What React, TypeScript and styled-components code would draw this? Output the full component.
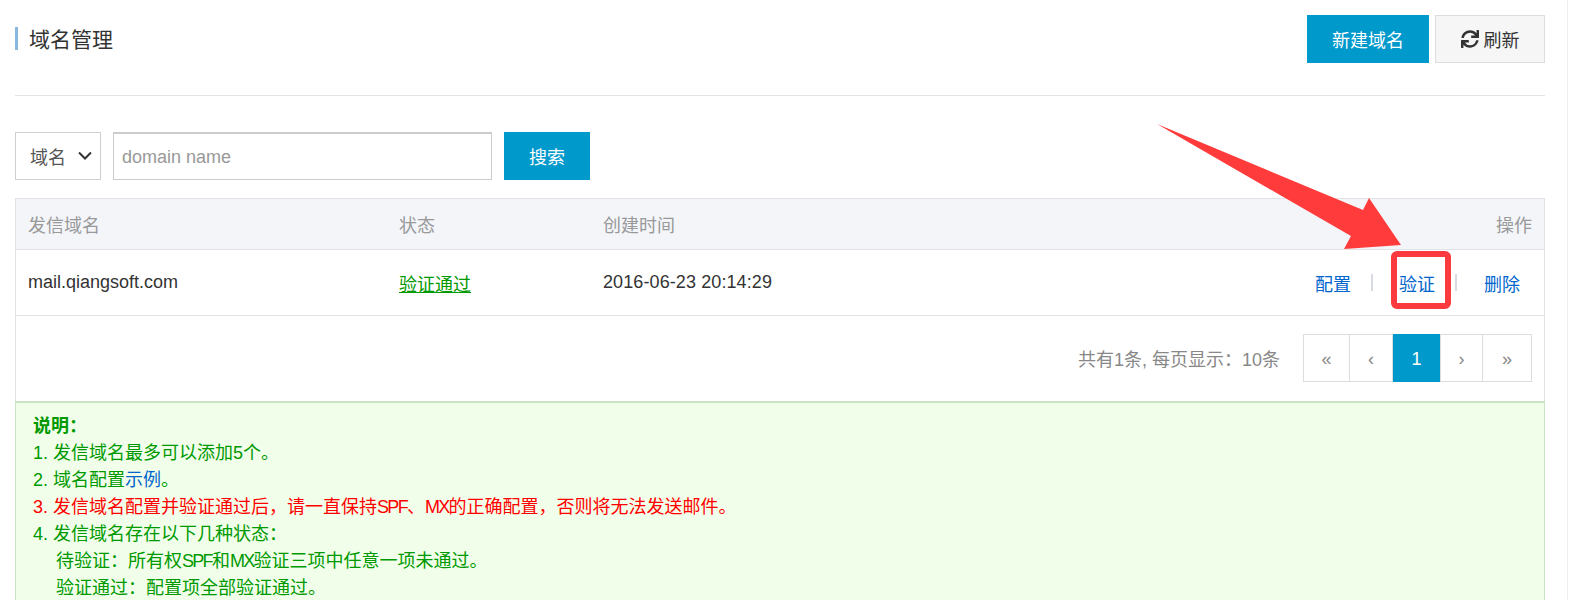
import styled, { createGlobalStyle } from 'styled-components';
import { FaSync } from 'react-icons/fa';

const BLUE = '#0099cc';

const GlobalStyle = createGlobalStyle`
  html, body {
    margin: 0;
    padding: 0;
    height: 600px;
    overflow: hidden;
    background: #fff;
  }
  body {
    font-family: "Liberation Sans", "Noto Sans CJK SC", sans-serif;
    font-size: 18px;
    color: #333;
  }
`;

const Page = styled.div`
  position: relative;
  box-sizing: border-box;
  width: 1573px;
  height: 600px;
  overflow: hidden;
  padding: 15px 28px 0 15px;
`;

const ScrollEdge = styled.div`
  position: absolute;
  top: 0;
  bottom: 0;
  left: 1567px;
  width: 6px;
  border-left: 1px solid #eceef1;
`;

const Header = styled.div`
  display: flex;
  align-items: flex-start;
  justify-content: space-between;
  height: 80px;
  border-bottom: 1px solid #e1e3e6;
`;

const Title = styled.h2`
  margin: 12px 0 0;
  height: 23px;
  padding-left: 11px;
  border-left: 3px solid #88b7e0;
  font-size: 21px;
  font-weight: 400;
  line-height: 25px;
  color: #333;
`;

const HeaderActions = styled.div`
  display: flex;
  gap: 6px;
`;

const PrimaryButton = styled.button<{ $width: number }>`
  box-sizing: border-box;
  width: ${(p) => p.$width}px;
  height: 48px;
  padding: 0;
  border: 0;
  background: ${BLUE};
  color: #fff;
  font: inherit;
  font-size: 18px;
`;

const RefreshButton = styled.button`
  box-sizing: border-box;
  display: flex;
  align-items: center;
  justify-content: center;
  gap: 5px;
  width: 110px;
  height: 48px;
  padding: 0;
  border: 1px solid #dddddd;
  background: #f6f6f6;
  color: #333;
  font: inherit;
  font-size: 18px;
`;

const SearchBar = styled.div`
  display: flex;
  gap: 12px;
  margin-top: 36px;
`;

const SelectBox = styled.div`
  box-sizing: border-box;
  display: flex;
  align-items: center;
  justify-content: space-between;
  width: 86px;
  height: 48px;
  padding: 0 7px 0 14px;
  border: 1px solid #cfcfcf;
  color: #555;
`;

const SearchInput = styled.input`
  box-sizing: border-box;
  width: 379px;
  height: 48px;
  padding: 2px 8px 0;
  border: 1px solid #cccccc;
  border-top-width: 2px;
  outline: 0;
  font: inherit;
  font-size: 18px;
  color: #555;
  &::placeholder {
    color: #999;
  }
`;

const Table = styled.div`
  margin-top: 18px;
  border-left: 1px solid #e1e3e6;
  border-right: 1px solid #e1e3e6;
`;

const HeadRow = styled.div`
  display: grid;
  grid-template-columns: 371px 204px 1fr 120px;
  align-items: center;
  box-sizing: border-box;
  height: 52px;
  padding: 0 12px;
  background: #f3f5f9;
  border-top: 1px solid #e1e3e6;
  border-bottom: 1px solid #e1e3e6;
  color: #999;
`;

const BodyRow = styled.div`
  display: grid;
  grid-template-columns: 371px 204px 1fr auto;
  align-items: center;
  box-sizing: border-box;
  height: 66px;
  padding: 0 24px 0 12px;
  border-bottom: 1px solid #e1e3e6;
`;

const RightCell = styled.div`
  text-align: right;
`;

const DateCell = styled.span`
  letter-spacing: 0.1px;
`;

const StatusLink = styled.span`
  color: #009900;
  text-decoration: underline;
  text-underline-offset: 1px;
`;

const RowActions = styled.div`
  display: flex;
  align-items: center;
`;

const ActionLink = styled.a`
  color: #0066cc;
`;

const Separator = styled.span<{ $after: number }>`
  width: 2px;
  height: 17px;
  margin: 0 ${(p) => p.$after}px 0 20px;
  background: #d8dce2;
`;

const PagerRow = styled.div`
  display: flex;
  align-items: center;
  justify-content: flex-end;
  box-sizing: border-box;
  height: 85px;
  padding: 0 12px 2px 0;
  color: #888;
`;

const PagerInfo = styled.span`
  margin-right: 23px;
`;

const Pager = styled.div`
  display: flex;
  height: 48px;
  border: 1px solid #dddddd;
  box-sizing: border-box;
`;

const PageCell = styled.span<{ $width: number; $active?: boolean }>`
  box-sizing: border-box;
  display: flex;
  align-items: center;
  justify-content: center;
  width: ${(p) => p.$width}px;
  margin: ${(p) => (p.$active ? '-1px 0' : '0')};
  padding-top: 3px;
  border-right: 1px solid #dddddd;
  background: ${(p) => (p.$active ? BLUE : 'transparent')};
  color: ${(p) => (p.$active ? '#fff' : '#888')};
  &:last-child {
    border-right: 0;
  }
`;

const Note = styled.div`
  box-sizing: border-box;
  height: 260px;
  padding: 10px 17px;
  background: #f1ffea;
  border: 1px solid #c9e3c4;
  border-top-width: 2px;
  color: #009900;
  line-height: 27px;
`;

const NoteTitle = styled.div`
  font-weight: 700;
`;

const NoteLine = styled.div<{ $danger?: boolean; $indent?: boolean }>`
  color: ${(p) => (p.$danger ? '#ff0000' : 'inherit')};
  padding-left: ${(p) => (p.$indent ? '23px' : '0')};
`;

const NoteLink = styled.a`
  color: #0066cc;
`;

const Acronym = styled.span`
  letter-spacing: -1.7px;
`;

const ArrowOverlay = styled.svg`
  position: absolute;
  left: 1150px;
  top: 120px;
`;

const HighlightBox = styled.div`
  position: absolute;
  box-sizing: border-box;
  left: 1391px;
  top: 251px;
  width: 60px;
  height: 58px;
  border: 6px solid #fb3a3f;
  border-radius: 6px;
`;

export default function App() {
  return (
    <Page>
      <GlobalStyle />
      <Header>
        <Title>域名管理</Title>
        <HeaderActions>
          <PrimaryButton $width={122}>新建域名</PrimaryButton>
          <RefreshButton>
            <FaSync size={18} color="#333" />
            刷新
          </RefreshButton>
        </HeaderActions>
      </Header>
      <SearchBar>
        <SelectBox>
          域名
          <svg width="16" height="10" viewBox="0 0 16 10" fill="none" stroke="#333" strokeWidth="2">
            <path d="M2 1.5l6 6 6-6" />
          </svg>
        </SelectBox>
        <SearchInput placeholder="domain name" />
        <PrimaryButton $width={86}>搜索</PrimaryButton>
      </SearchBar>
      <Table>
        <HeadRow>
          <span>发信域名</span>
          <span>状态</span>
          <span>创建时间</span>
          <RightCell>操作</RightCell>
        </HeadRow>
        <BodyRow>
          <span>mail.qiangsoft.com</span>
          <div>
            <StatusLink>验证通过</StatusLink>
          </div>
          <DateCell>2016-06-23 20:14:29</DateCell>
          <RowActions>
            <ActionLink>配置</ActionLink>
            <Separator $after={26} />
            <ActionLink>验证</ActionLink>
            <Separator $after={27} />
            <ActionLink>删除</ActionLink>
          </RowActions>
        </BodyRow>
        <PagerRow>
          <PagerInfo>共有1条, 每页显示：10条</PagerInfo>
          <Pager>
            <PageCell $width={46}>«</PageCell>
            <PageCell $width={43}>‹</PageCell>
            <PageCell $width={48} $active>1</PageCell>
            <PageCell $width={42}>›</PageCell>
            <PageCell $width={48}>»</PageCell>
          </Pager>
        </PagerRow>
      </Table>
      <Note>
        <NoteTitle>说明：</NoteTitle>
        <NoteLine>1. 发信域名最多可以添加5个。</NoteLine>
        <NoteLine>2. 域名配置<NoteLink>示例</NoteLink>。</NoteLine>
        <NoteLine $danger>3. 发信域名配置并验证通过后，请一直保持<Acronym>SPF</Acronym>、<Acronym>MX</Acronym>的正确配置，否则将无法发送邮件。</NoteLine>
        <NoteLine>4. 发信域名存在以下几种状态：</NoteLine>
        <NoteLine $indent>待验证：所有权<Acronym>SPF</Acronym>和<Acronym>MX</Acronym>验证三项中任意一项未通过。</NoteLine>
        <NoteLine $indent>验证通过：配置项全部验证通过。</NoteLine>
      </Note>
      <ArrowOverlay width="260" height="140" viewBox="1150 120 260 140">
        <polygon points="1157,124 1363,210 1369,198 1401,245 1344,249 1351,236" fill="#ff3b3b" />
      </ArrowOverlay>
      <HighlightBox />
      <ScrollEdge />
    </Page>
  );
}
